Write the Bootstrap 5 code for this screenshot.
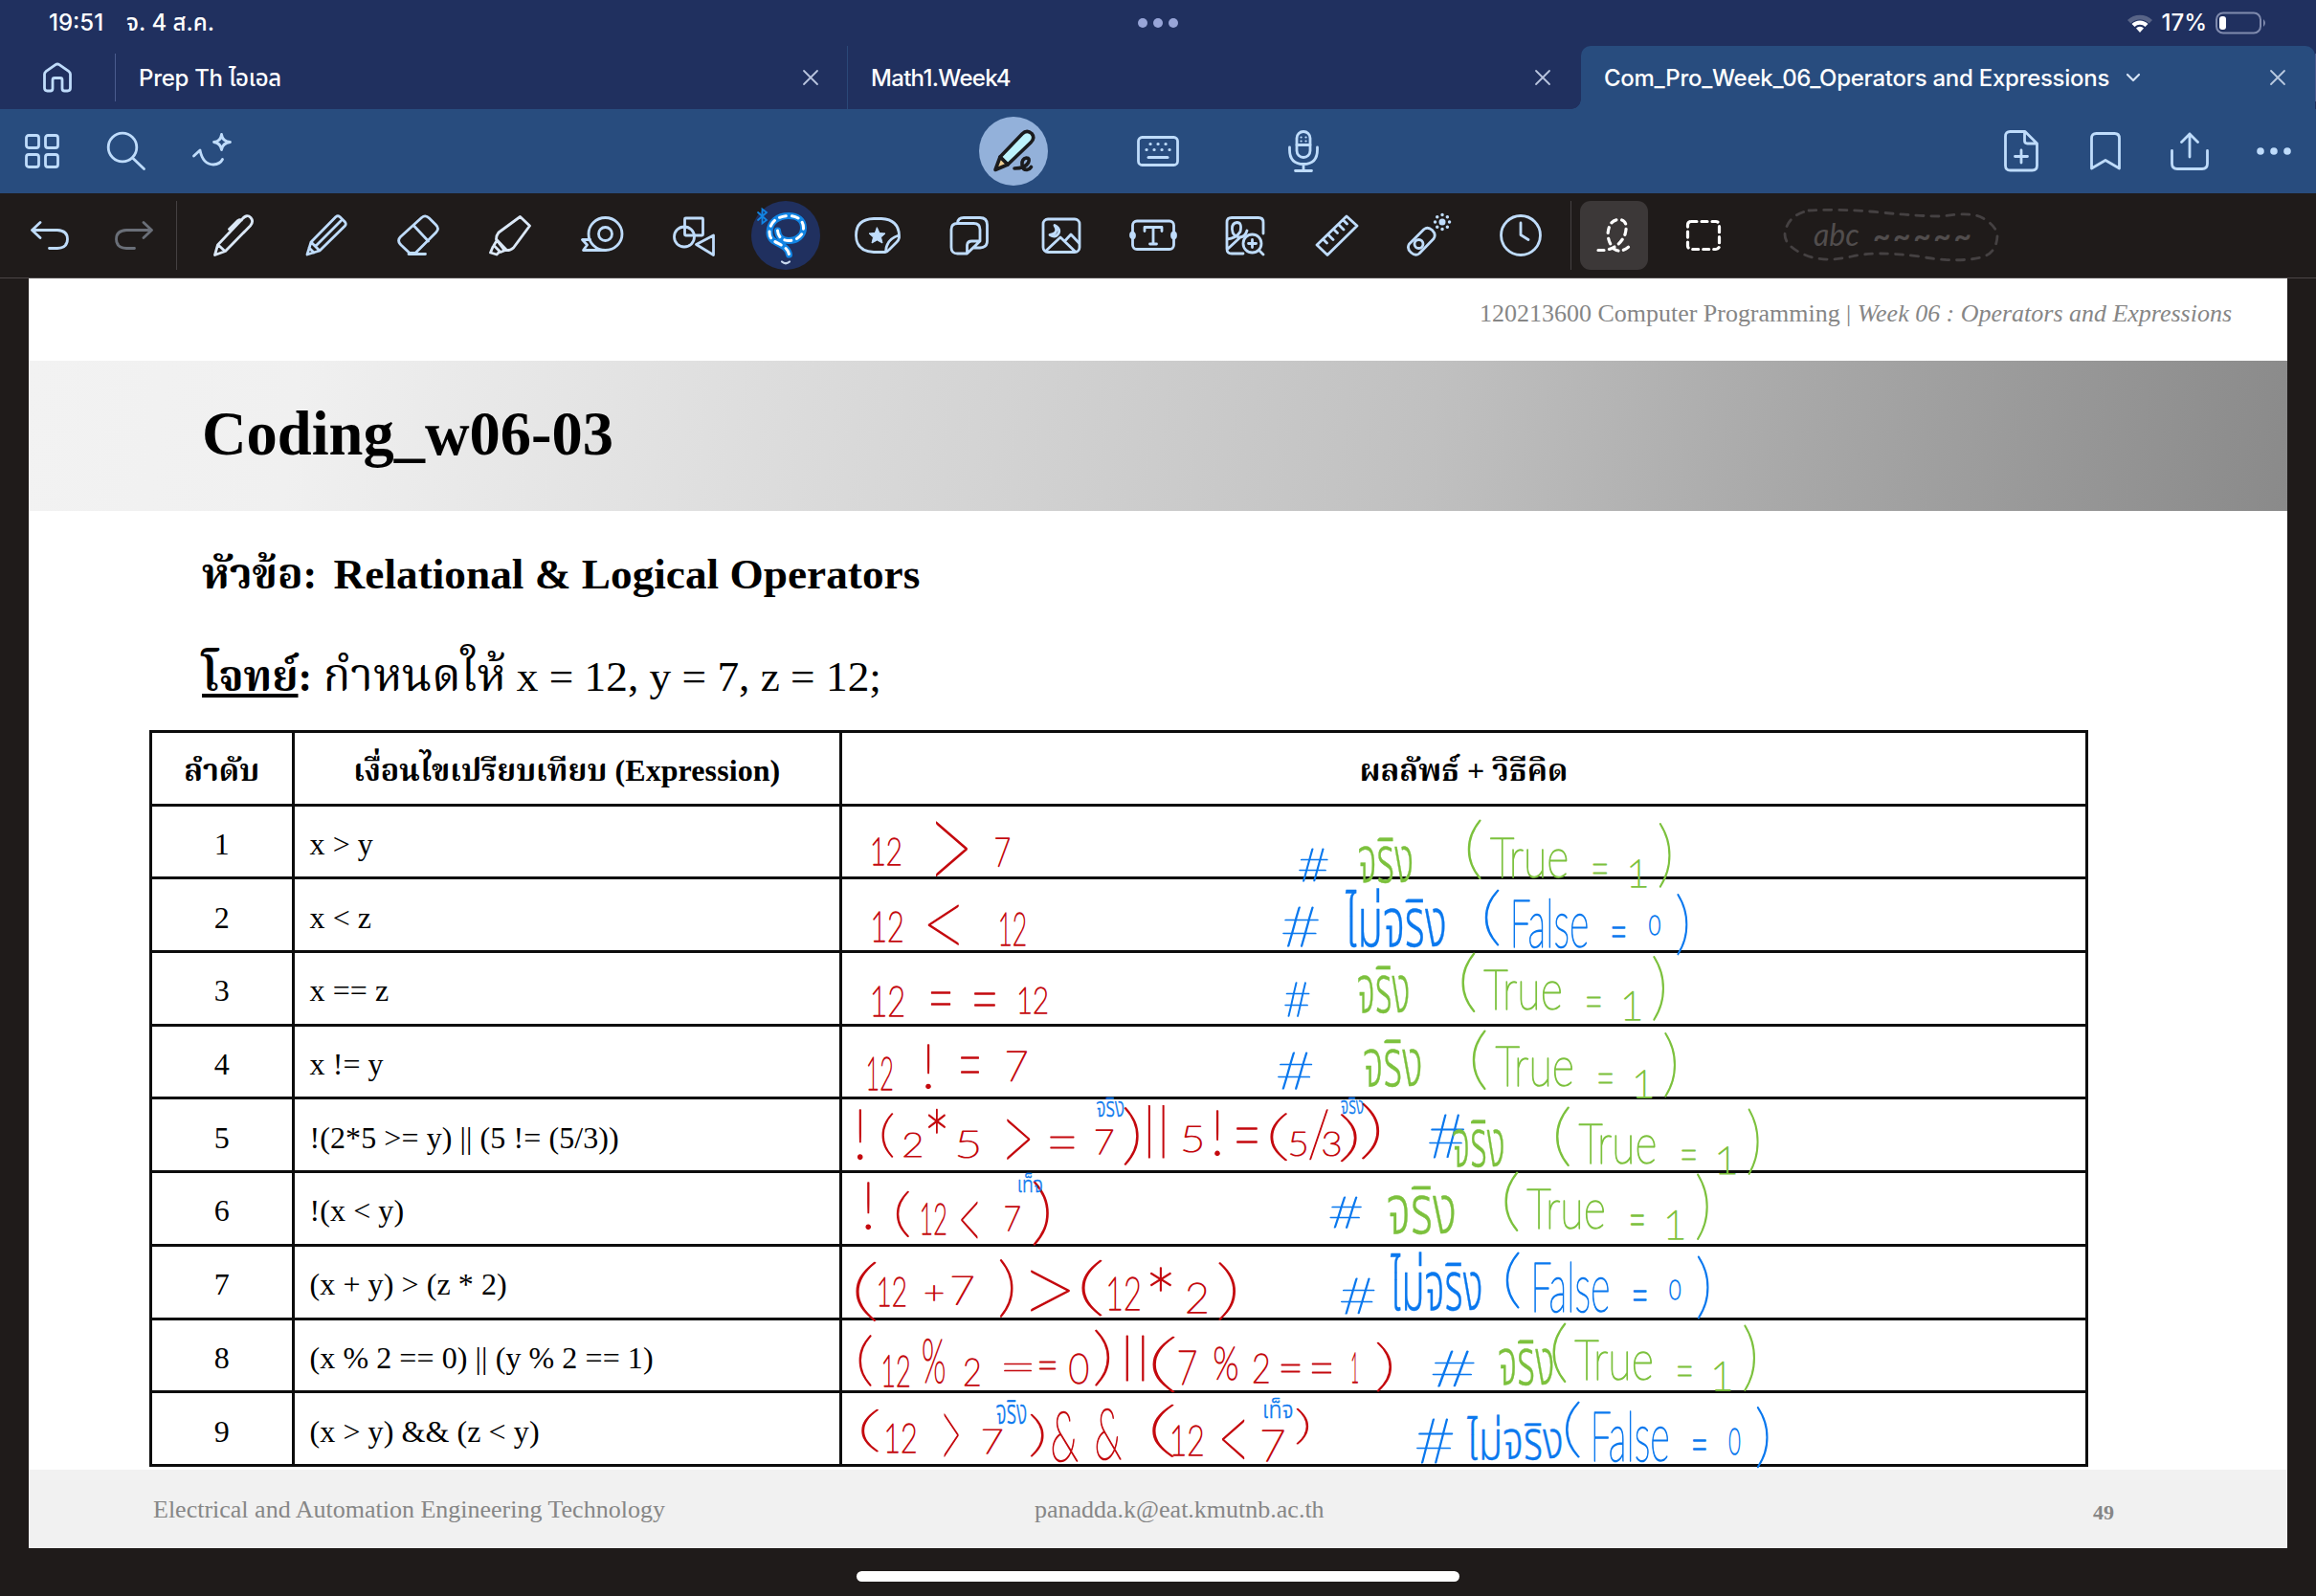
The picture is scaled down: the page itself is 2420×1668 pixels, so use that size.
<!DOCTYPE html>
<html lang="th">
<head>
<meta charset="utf-8">
<title>Com_Pro_Week_06_Operators and Expressions</title>
<link href="https://cdn.jsdelivr.net/npm/bootstrap@5.3.0/dist/css/bootstrap.min.css" rel="stylesheet">
<script src="https://cdn.jsdelivr.net/npm/bootstrap@5.3.0/dist/js/bootstrap.bundle.min.js"></script>
<style>
  :root{--navy:#20305f;--blue:#284c7e;--ink:#1f1b1a;--ice:#bfdcfb}
  html,body{width:2420px;height:1668px;overflow:hidden}
  body{background:var(--ink);color:#fff;font-family:Inter,"Noto Sans","Noto Sans Thai",sans-serif;font-size:24px}
  svg{display:block;overflow:visible;flex:none}
  .ln{fill:none;stroke:var(--ice);stroke-width:2.8;stroke-linecap:round;stroke-linejoin:round}
  .statusbar{height:48px;background:var(--navy);padding:0 51px;line-height:48px;font-weight:500}
  .statusbar .side{width:400px}
  .tabstrip{height:66px;background:var(--navy);line-height:66px;font-weight:500;font-size:24px}
  .homecell{width:120px;height:66px}
  .vr-short{width:1px;height:50px;background:#4a5b8e}
  .doc{height:66px;border-right:1px solid #2b4878;padding:0 28px 0 24px;letter-spacing:-.27px}
  .doc span{padding-top:2px}
  .doc.on{background:var(--blue);border:0;border-radius:10px 10px 0 0;position:relative}
  .doc.on::before{content:"";position:absolute;left:-10px;bottom:0;width:10px;height:10px;background:radial-gradient(circle at 0 0,var(--navy) 9.5px,var(--blue) 10px)}
  .navrow{height:88px;background:var(--blue)}
  .cell88{width:88px}.cell96{width:96px}.cellmode{width:151.5px}
  .toolrow{height:89px;border-bottom:1px solid #4b4647;padding-left:8px;padding-bottom:1px}
  .vr-tool{width:1px;height:72px;background:#454142}
  .optbox{width:71px;height:72px;border-radius:11px;background:#3c3838}
  .sheet{width:2360px;height:1327px;margin-left:30px;background:#fff;color:#000;font-family:"Liberation Serif","Noto Serif Thai",serif;position:relative}
  .runhead{height:86px;padding:19px 58px 0 0;font-size:25.98px;line-height:36px;color:#868686;text-align:right}
  .band{height:157px;padding-left:181px;background:linear-gradient(98deg,#f2f2f2 0%,#f0f0f0 12%,#e2e2e2 27%,#d4d4d4 42%,#c0c0c0 62%,#a8a8a8 78%,#979797 90%,#8a8a8a 100%)}
  .band h1{font-size:64.5px;font-weight:700;margin:0;line-height:154px}
  .topic{height:229px;padding-left:181px}
  .topic p{margin:0;white-space:nowrap;font-size:45.3px;line-height:60px;height:60px;box-sizing:content-box}
  .topic .th{font-size:44px}
  .topic .thl{font-size:47.6px;line-height:50px}
  .topic p:first-child{padding-top:36px;font-weight:700}
  .topic p:first-child .th{margin-right:6px}
  .topic p:last-child{padding-top:47px}
  .quiz{width:2026px;margin-left:126px;table-layout:fixed;border-collapse:collapse;font-size:32px;line-height:40px;color:#000}
  .quiz th,.quiz td{border:3px solid #0c0c0c;height:76.7px;padding:5px 0 0 16px;vertical-align:middle;letter-spacing:.08px}
  .quiz th,.quiz td:first-child{text-align:center;padding-left:0}
  .pagefoot{position:absolute;left:0;right:0;bottom:0;height:82px;background:#f1f1f1;color:#868686;font-size:26px;line-height:82px;padding:1px 181px 0 130px}
  .footleft{width:921px}
  .pageno{font-size:22px;font-weight:700;padding-top:3px}
  .inkpad{position:absolute;left:-30px;top:-291px;width:2420px;height:1668px;pointer-events:none}
  .inkpad text{font-family:Lato,"Noto Sans Thai",sans-serif;white-space:pre;stroke-width:1.3px;stroke-linejoin:round;stroke-linecap:round;vector-effect:non-scaling-stroke}
  .inkpad text.thai{stroke-width:.4px}
  .homepill{width:630px;height:11px;border-radius:6px;background:#fff;margin:24px auto 0}
  .abc{font-style:italic;font-size:32px;fill:#514d4d}
</style>
</head>
<body>
<header>
  <div class="statusbar d-flex justify-content-between align-items-center">
    <div class="side d-flex"><span style="width:81px">19:51</span><span>จ. 4 ส.ค.</span></div>
    <svg width="42" height="10"><g fill="#98a5d8"><circle cx="5" cy="5" r="5"/><circle cx="21" cy="5" r="5"/><circle cx="37" cy="5" r="5"/></g></svg>
    <div class="side d-flex justify-content-end align-items-center">
      <svg width="28" height="22" viewBox="0 0 28 22" class="me-2"><path d="M1 8A18.500 18.500 0 0 1 27 8L23.500 11.500A13.500 13.500 0 0 0 4.500 11.500Z" fill="#fff" opacity=".25"/><path d="M5.500 12A12 12 0 0 1 22.500 12L19.500 15A8 8 0 0 0 8.500 15Z" fill="#fff"/><path d="M10 16.500A5.500 5.500 0 0 1 18 16.500L14 21Z" fill="#fff"/></svg>
      <span style="margin-right:9px">17%</span>
      <svg width="54" height="24" viewBox="0 0 54 24"><rect x="1" y="1.500" width="46" height="21" rx="7" fill="none" stroke="#808bae" stroke-width="2"/><rect x="4" y="5" width="7" height="14" rx="3" fill="#fff"/><path d="M50 8q4 4 0 8z" fill="#808bae"/></svg>
    </div>
  </div>
  <div class="tabstrip d-flex align-items-center">
    <div class="homecell d-flex align-items-center justify-content-center"><svg width="30" height="30" viewBox="0 0 30 30" class="ln"><path d="M1.500 11.500Q1.500 10 3 8.700L13 1.700Q15 .3 17 1.700L27 8.700Q28.500 10 28.500 11.500V26Q28.500 29 25.500 29H22.500Q20 29 20 26.500V17.500Q20 15.500 18 15.500H12Q10 15.500 10 17.500V26.500Q10 29 7.500 29H4.500Q1.500 29 1.500 26Z"/></svg></div>
    <div class="vr-short"></div>
    <div class="doc d-flex align-items-center justify-content-between" style="width:765px"><span>Prep Th ไอเอล</span><svg width="16" height="16" class="ln" style="stroke:#b9c4de;stroke-width:1.8;margin-right:2px"><path d="M1 1 15 15M15 1 1 15"/></svg></div>
    <div class="doc d-flex align-items-center justify-content-between" style="width:766px;border:0"><span style="letter-spacing:-.7px">Math1.Week4</span><svg width="16" height="16" class="ln" style="stroke:#b9c4de;stroke-width:1.8;margin-right:4px"><path d="M1 1 15 15M15 1 1 15"/></svg></div>
    <div class="doc on d-flex align-items-center" style="width:767px"><span>Com_Pro_Week_06_Operators and Expressions</span><svg width="14" height="8" class="ln" style="stroke:#d5e3f5;stroke-width:2.2;margin-left:18px"><path d="M1 1 7 7 13 1"/></svg><svg width="16" height="16" class="ln ms-auto" style="stroke:#b9c9e0;stroke-width:1.8;margin-right:3px"><path d="M1 1 15 15M15 1 1 15"/></svg></div>
    <div class="vr-short"></div>
  </div>
  <nav class="navrow d-flex align-items-center justify-content-between">
    <div class="d-flex" style="width:352px">
      <div class="cell88 d-flex justify-content-center align-items-center"><svg width="36" height="36" class="ln"><rect x="1.500" y="1.500" width="13" height="13" rx="2.500"/><rect x="21.500" y="1.500" width="13" height="13" rx="2.500"/><rect x="1.500" y="21.500" width="13" height="13" rx="2.500"/><rect x="21.500" y="21.500" width="13" height="13" rx="2.500"/></svg></div>
      <div class="cell88 d-flex justify-content-center"><svg width="40" height="40" class="ln"><circle cx="16" cy="16" r="14.800"/><path d="M26.500 27 38.500 38.500"/></svg></div>
      <div class="cell88 d-flex justify-content-center"><svg width="40" height="40" class="ln"><path d="M2.500 25 9 19C11 29 16 34 23 34Q30 33.500 32.500 28.500M31.500 2.500Q32.500 10 40.500 10.500Q32.500 11.500 31.500 18.500Q30.500 11.500 23.500 10.500Q30.500 10 31.500 2.500Z"/></svg></div>
    </div>
    <div class="d-flex align-items-center">
      <div class="cellmode d-flex justify-content-center"><svg width="72" height="72"><circle cx="36" cy="36" r="36" fill="#93b1da"/><g stroke="#1b1b1d" stroke-width="3.600" stroke-linejoin="round" stroke-linecap="round" fill="none"><path d="M22 42 45 18Q50 13 55 17.500Q59 22 54 27L30 50Z" fill="#bdf3fc"/><path d="M22 42 17 55.500 30 50Z" fill="#efcf93"/><path d="M37 54Q48 54 51.500 48Q53.500 43 49.500 43Q44.500 44 45 50Q45.500 55.500 50 55.500Q53 55 54.500 52.500"/></g></svg></div>
      <div class="cellmode d-flex justify-content-center align-items-center"><svg width="44" height="32" class="ln"><rect x="1.500" y="1.500" width="41" height="29" rx="4"/><path d="M12 22.500H32" stroke-width="3"/><g stroke-width="3.200"><path d="M14 8.500h.1M22 8.500h.1M30 8.500h.1M10 14.500h.1M18 14.500h.1M26 14.500h.1M34 14.500h.1"/></g></svg></div>
      <div class="cellmode d-flex justify-content-center"><svg width="32" height="44" class="ln"><rect x="9" y="1.500" width="14" height="27" rx="7"/><path d="M1.500 18V20.500Q1.500 35.500 16 35.500Q30.500 35.500 30.500 20.500V18M16 35.500V42M7.500 42.500H24.500M9 15.500H23"/><path stroke-width="2.200" d="M13.500 7.500h.1M18.500 7.500h.1M13.500 11.500h.1M18.500 11.500h.1"/></svg></div>
    </div>
    <div class="d-flex align-items-center">
      <div class="cell88 d-flex justify-content-center"><svg width="36" height="44" class="ln"><path d="M6.500 1.500H22L34.500 14V37Q34.500 42 29.500 42H6.500Q1.500 42 1.500 37V6.500Q1.500 1.500 6.500 1.500ZM21.500 2V11Q21.500 14 24.500 14H34M18 21V34M11.500 27.500H24.500"/></svg></div>
      <div class="cell88 d-flex justify-content-center"><svg width="32" height="40" class="ln"><path d="M1.500 38V6.500Q1.500 1.500 6.500 1.500H25.500Q30.500 1.500 30.500 6.500V38L16 29.500Z"/></svg></div>
      <div class="cell88 d-flex justify-content-center"><svg width="40" height="40" class="ln"><path d="M1.500 19.500V33Q1.500 38.500 7 38.500H33Q38.500 38.500 38.500 33V19.500M20 26V2M11.500 10.500 20 2 28.500 10.500"/></svg></div>
      <div class="cell88 d-flex justify-content-center"><svg width="38" height="10"><g fill="#bfdcfb"><circle cx="5" cy="5" r="3.800"/><circle cx="19" cy="5" r="3.800"/><circle cx="33" cy="5" r="3.800"/></g></svg></div>
    </div>
  </nav>
  <div class="toolrow d-flex align-items-center">
    <div class="cell88 d-flex justify-content-center"><svg width="40" height="30" class="ln"><path d="M10 1.500 1.500 9.500 10 17.500M2 9.500H28Q38.500 10 38.500 19Q38.500 28 28 28.500H19.500"/></svg></div>
    <div class="cell88 d-flex justify-content-center"><svg width="40" height="30" class="ln" style="stroke:#6a6f78"><path d="M30 1.500 38.500 9.500 30 17.500M38 9.500H12Q1.500 10 1.500 19Q1.500 28 12 28.500H20.500"/></svg></div>
    <div class="vr-tool" style="margin:0 12px 0 0"></div>
    <div class="cell96 d-flex justify-content-center"><svg width="48" height="48" class="ln" style="stroke:#dbe8f7"><path d="M3.500 44.500 6.500 34 32.500 6.500Q37 1.500 41 5.500Q44.500 9.500 40.500 14L14.500 40.500ZM7 34 14 40.500M18.500 17.500 27.500 8.500Q29.500 7 31.500 8"/></svg></div>
    <div class="cell96 d-flex justify-content-center"><svg width="48" height="48" class="ln"><path d="M4 44 8 31 34 4.500Q36 3 38 4.500L43.500 10Q45 12 43.500 14L17 40ZM8 31 17 40M12.500 35.500 39 9M6 37 11 42"/></svg></div>
    <div class="cell96 d-flex justify-content-center"><svg width="48" height="48" class="ln"><path d="M27.500 5.500Q31.500 2 35.500 6L42.500 13Q46.500 17 42.500 21L21 42.500H15L6 34Q1.500 29.500 5.500 25.500ZM20 14.500 34.500 30M14 43.500H31.500"/></svg></div>
    <div class="cell96 d-flex justify-content-center"><svg width="48" height="48" class="ln" style="stroke:#dbe8f7"><path d="M9.500 28Q9.500 24 12 21L34.500 4.500L44.500 14L27.500 37Q24 40.500 18 39.500ZM9.500 28 20.500 39.500M10 29.500 7 34.500 14 41.500 19 39.500M6 36 3.500 42 10 44 13 41"/></svg></div>
    <div class="cell96 d-flex justify-content-center"><svg width="48" height="48" class="ln"><ellipse cx="27.500" cy="22.500" rx="17.500" ry="17"/><circle cx="27.500" cy="22.500" r="7"/><path d="M27.500 39.500H4.500L8.500 34 3.500 28.500H11.500"/></svg></div>
    <div class="cell96 d-flex justify-content-center"><svg width="48" height="48" class="ln"><rect x="14.500" y="6" width="19" height="18" rx="1"/><circle cx="14" cy="25.500" r="10.500"/><path d="M26.500 33.500 44.500 24V44.500Z"/></svg></div>
    <div class="cell96 d-flex justify-content-center"><svg width="72" height="72"><circle cx="36" cy="36" r="36" fill="#20305f"/><g fill="none" stroke-linecap="round"><path d="M27.500 31C28 38 33 41.500 39 41.500C48 41.500 54.500 36 54.500 28C54.500 20 48 15.500 39 15.500C28 15.500 19 22 19 33C19 46 37 43 39.500 56" stroke="#1285e4" stroke-width="7"/><path d="M27.500 31C28 38 33 41.500 39 41.500C48 41.500 54.500 36 54.500 28C54.500 20 48 15.500 39 15.500C28 15.500 19 22 19 33C19 46 37 43 39.500 56" stroke="#fff" stroke-width="3" stroke-dasharray="7 6"/><path d="M32 63.500Q36 67 40 63.500" stroke="#c9d9ee" stroke-width="2.200"/><path d="M7 12 16 20 11.500 23.500V8.500L16 12 7 20" stroke="#1285e4" stroke-width="1.800"/></g></svg></div>
    <div class="cell96 d-flex justify-content-center"><svg width="48" height="48" class="ln"><path d="M32 41.500H20Q1.500 40.500 1.500 24Q1.500 7 20 6.500H28Q46 7.500 46.500 24V26.500Q46 29 44 31L36 39Q34 41.500 32 41.500ZM32.500 41Q33 28 46 24"/><path d="M23.500 16 26 21.500 32 22 27.500 26 29 32 23.500 29 18 32 19.500 26 15 22 21 21.500Z" fill="#bfdcfb" stroke-width="1"/></svg></div>
    <div class="cell96 d-flex justify-content-center"><svg width="48" height="48" class="ln"><path d="M5 18Q5 11.500 11.500 11.500H28.500Q35 11.500 35 18V30L21.500 43H11.500Q5 43 5 36.500ZM21.500 42.500V35Q21.500 30 26.500 30H35M11.500 11Q12 5.500 18 5.500H35Q42.500 5.500 42.500 13V30Q42.500 36.500 35 37H29"/></svg></div>
    <div class="cell96 d-flex justify-content-center"><svg width="48" height="48" class="ln"><rect x="5" y="7" width="38" height="34.500" rx="5"/><path d="M8 40 23 26 38 40.500M28 29.500 34 23 42.500 32M17 13.500Q22 22 12 23.500Q18 27 21 22Q23.500 17 17 13.500Z"/></svg></div>
    <div class="cell96 d-flex justify-content-center"><svg width="48" height="48" class="ln"><rect x="2.500" y="9" width="43" height="29.500" rx="4.500"/><path d="M15 19.500V15.500H33V19.500M24 15.500V33M20.500 33H27.500"/><ellipse cx="2.500" cy="24" rx="2" ry="2.800" fill="#bfdcfb"/><ellipse cx="45.500" cy="24" rx="2" ry="2.800" fill="#bfdcfb"/></svg></div>
    <div class="cell96 d-flex justify-content-center"><svg width="48" height="48" class="ln"><path d="M22 43H10Q5 43 5 38V10.500Q5 5.500 10 5.500H38Q43 5.500 43 10.500V22M5 28Q15 27 19 20Q21 10.500 15.500 10.500Q10 11 10.500 18Q11 25 18 26Q24 26 26 19M6 38 19 26"/><circle cx="31.500" cy="32.500" r="9.500"/><path d="M38.500 39.500 43 44M31.500 28.500V36.500M27.500 32.500H35.500"/></svg></div>
    <div class="cell96 d-flex justify-content-center"><svg width="48" height="48" class="ln"><path d="M3 34 34 4 45 14 14 44.500ZM9.500 28 13.500 32M14.500 23 20 28.500M20.500 17.500 24.500 21.500M25.500 12.500 31 18M30.500 8 34.500 12"/></svg></div>
    <div class="cell96 d-flex justify-content-center"><svg width="48" height="48" class="ln"><path d="M3.500 33 19 17.500Q23 14.500 27.500 18.500Q32 23 29 27.500L14 43Q10 46 5.500 42Q.5 37.500 3.500 33Z"/><circle cx="13.500" cy="33" r="4.500"/><circle cx="38" cy="10" r="3.500" fill="#bfdcfb" stroke="none"/><path d="M38 2.500h.1M38 17.500h.1M30.500 10h.1M45.500 10h.1M32.700 4.700h.1M43.300 4.700h.1M32.700 15.300h.1M43.300 15.300h.1" stroke-width="3.400"/></svg></div>
    <div class="cell96 d-flex justify-content-center"><svg width="48" height="48" class="ln"><circle cx="24" cy="24" r="20.500"/><path d="M24 11V23.500L32 28.500"/></svg></div>
    <div class="vr-tool" style="margin:0 9px 0 4px"></div>
    <div class="optbox d-flex align-items-center justify-content-center"><svg width="38" height="38" class="ln" style="stroke:#fff;stroke-width:3.200;stroke-dasharray:6 5.500"><path d="M2 34.500H9Q24 32 30 18Q34 3 24 2.500Q13 2.500 12 18Q13 28 19 33.500Q26 38 35 30"/></svg></div>
    <div class="cell96 d-flex justify-content-center" style="margin-left:10px"><svg width="36" height="32" class="ln" style="stroke:#fff;stroke-width:3.200;stroke-dasharray:6 5"><rect x="1.500" y="1.500" width="33" height="29" rx="3.500"/></svg></div>
    <svg width="222" height="54" style="margin-left:37px"><path d="M25 1Q60-1 100 3T165 7Q195 2 207 9Q222 18 222 28Q221 46 205 50Q180 56 140 49Q95 43 70 49Q40 56 20 47Q0 38 0 26Q2 6 25 1Z" fill="none" stroke="#454142" stroke-width="2.800" stroke-dasharray="8 8" stroke-linecap="round"/><text x="30" y="38" class="abc" font-family="Lato">abc</text><text x="92" y="39" class="abc" font-family="Lato" font-weight="700" textLength="103" lengthAdjust="spacing">~~~~~</text></svg>
  </div>
</header>
<main class="sheet">
  <div class="runhead">120213600 Computer Programming | <em>Week 06 : Operators and Expressions</em></div>
  <div class="band"><h1>Coding_w06-03</h1></div>
  <div class="topic">
    <p><span class="th">หัวข้อ:</span> Relational &amp; Logical Operators</p>
    <p><b class="th"><u>โจทย์</u>:</b> <span class="thl">กำหนดให้</span> x = 12, y = 7, z = 12;</p>
  </div>
  <table class="quiz">
    <colgroup><col style="width:148.5px"><col style="width:572.5px"><col></colgroup>
    <tr><th>ลำดับ</th><th>เงื่อนไขเปรียบเทียบ (Expression)</th><th>ผลลัพธ์ + วิธีคิด</th></tr>
    <tr><td>1</td><td>x &gt; y</td><td></td></tr>
    <tr><td>2</td><td>x &lt; z</td><td></td></tr>
    <tr><td>3</td><td>x == z</td><td></td></tr>
    <tr><td>4</td><td>x != y</td><td></td></tr>
    <tr><td>5</td><td>!(2*5 &gt;= y) || (5 != (5/3))</td><td></td></tr>
    <tr><td>6</td><td>!(x &lt; y)</td><td></td></tr>
    <tr><td>7</td><td>(x + y) &gt; (z * 2)</td><td></td></tr>
    <tr><td>8</td><td>(x % 2 == 0) || (y % 2 == 1)</td><td></td></tr>
    <tr><td>9</td><td>(x &gt; y) &amp;&amp; (z &lt; y)</td><td></td></tr>
  </table>
  <div class="pagefoot d-flex"><span class="footleft">Electrical and Automation Engineering Technology</span><span>panadda.k@eat.kmutnb.ac.th</span><span class="pageno ms-auto">49</span></div>
  <svg class="inkpad" id="inkpad"></svg>
</main>
<div class="homepill"></div>
<script>
// Handwritten notes: each entry is text, left, top, right, bottom in its panel's own units.
const RED='#c4090e', BLUE='#0a78ee', GREEN='#7cc13d';
const panels=[
 {ox:870,oy:750,sx:3,sy:3,ink:[
  [RED,['12',126,378,213,462],['>',325,327,422,500],['7',512,382,554,470],
       ['12',128,610,218,702],['<',300,587,394,714],['12',526,612,604,714],
       ['12',126,840,222,935],['=',310,862,368,900],['=',446,865,508,902],['12',586,848,672,928],
       ['12',112,1065,186,1166],['!',292,1026,308,1164],['=',404,1064,458,1112],['7',548,1046,608,1140]]]},
 {ox:1320,oy:750,sx:2.8,sy:3,ink:[
  [BLUE,['#',106,410,188,514],['#',58,592,160,716],['#',64,830,134,936],['#',44,1048,142,1164],
        ['ไม่จริง',240,532,530,718],['(',650,540,688,714],['False',733,565,948,722],['=',1022,656,1058,686],['0',1130,622,1160,682],[')',1212,550,1240,744]],
  [GREEN,['จริง',280,376,434,518],['(',600,320,636,508],['True',665,378,888,502],['=',966,458,1004,488],['1',1074,446,1120,532],[')',1160,330,1190,534],
         ['จริง',278,780,424,926],['(',582,738,618,924],['True',646,794,870,916],['=',948,874,986,904],['1',1056,860,1102,948],[')',1142,746,1172,950],
         ['จริง',296,1012,460,1158],['(',614,978,650,1166],['True',680,1036,904,1158],['=',982,1116,1020,1146],['1',1090,1104,1136,1190],[')',1176,988,1206,1192]]]},
 {ox:870,oy:1130,sx:3,sy:3,ink:[
  [RED,['!',78,92,94,246],['(',156,100,188,240],['2',224,160,278,238],['*',300,88,352,162],['5',394,152,456,240],['>',548,120,618,246],['=',684,172,756,208],['7',826,152,878,230],[')',916,80,958,262],['||',990,76,1038,242],['5',1100,140,1156,224],['!',1198,92,1214,234],['=',1268,146,1330,192],
       ['!',104,318,120,464],['(',202,346,238,490],['12',280,382,354,480],['<',404,376,454,492],['7',542,394,586,470],[')',630,312,676,516],
       ['(',74,566,134,752],['12',146,614,228,704],['+',292,640,346,686],['7',376,612,440,702],[')',526,560,564,740],['>',622,594,742,722],['(',782,558,842,736],['12',866,612,962,716],['*',996,586,1060,658],['2',1112,634,1172,726],[')',1212,568,1262,748],
       ['(',84,796,120,956],['12',160,856,240,956],['%',284,808,350,948],['2',414,868,460,954],['=',540,888,622,910],['=',650,882,698,904],['0',744,852,800,948],[')',824,782,866,956],['||',920,798,974,940],['(',1004,802,1070,976],['7',1086,844,1138,952],['%',1198,834,1268,938],['2',1320,856,1366,946],['=',1408,888,1464,912],
       ['(',92,1026,142,1162],['12',170,1076,260,1164],['>',350,1042,394,1178],['7',472,1092,530,1168],[')',622,1044,660,1176],['&',690,1038,768,1192],['&',828,1030,904,1188],['(',1004,1012,1068,1180],['12',1066,1078,1160,1172],['<',1222,1060,1290,1184],['7',1348,1094,1414,1192],[')',1456,1026,1490,1138]],
  [BLUE,['จริง',828,52,912,112],['เท็จ',584,290,656,350],['จริง',514,1002,606,1076],['เท็จ',1354,990,1440,1056]]]},
 {ox:1320,oy:1130,sx:2.8,sy:3,ink:[
  [RED,['(',22,100,68,250],['5',80,160,124,236],['/',136,86,188,244],['3',176,160,224,236],[')',228,104,272,254],[')',290,70,338,244],
       ['=',144,884,198,914],['1',260,852,276,944],[')',334,820,374,974]],
  [BLUE,['จริง',228,50,292,104],['#',486,102,586,240],['#',196,362,286,458],['#',228,618,324,730],['#',496,846,616,958],['#',450,1056,554,1196],
        ['ไม่จริง',372,534,636,718],['(',712,538,748,714],['False',794,564,1010,724],['=',1084,656,1120,686],['0',1190,624,1220,684],[')',1272,550,1302,746],
        ['ไม่จริง',596,1044,872,1186],['(',886,1006,924,1182],['False',968,1030,1184,1192],['=',1258,1124,1294,1154],['0',1364,1090,1394,1170],[')',1446,1018,1476,1212]],
  [GREEN,['จริง',556,122,702,268],['(',858,78,894,266],['True',924,136,1146,260],['=',1226,216,1264,246],['1',1332,204,1380,290],[')',1420,88,1448,294],
         ['จริง',366,328,558,480],['(',708,282,744,470],['True',772,340,996,464],['=',1076,420,1112,450],['1',1182,406,1228,494],[')',1270,292,1300,498],
         ['จริง',690,812,846,954],['(',848,758,884,944],['True',912,814,1136,938],['=',1214,894,1252,924],['1',1320,880,1366,968],[')',1408,766,1438,972]]]}
];
const pad=document.getElementById('inkpad');
const pen=document.createElement('canvas').getContext('2d');
for(const p of panels) for(const [color,...words] of p.ink) for(const [t,l,tp,r,b] of words){
  const thai=/[\u0e00-\u0e7f]/.test(t);
  const weight=thai?300:100;
  pen.font=weight+' 100px Lato,"Noto Sans Thai",sans-serif';
  const m=pen.measureText(t);
  const mw=m.actualBoundingBoxLeft+m.actualBoundingBoxRight, mh=m.actualBoundingBoxAscent+m.actualBoundingBoxDescent;
  const ky=(b-tp)/p.sy/mh, kx=(r-l)/p.sx/mw;
  const e=document.createElementNS('http://www.w3.org/2000/svg','text');
  const x=p.ox+l/p.sx+m.actualBoundingBoxLeft*kx, y=p.oy+tp/p.sy+m.actualBoundingBoxAscent*ky;
  e.setAttribute('transform','translate('+x.toFixed(1)+' '+y.toFixed(1)+') scale('+(kx/ky).toFixed(3)+' 1)');
  e.setAttribute('font-size',(100*ky).toFixed(1));
  e.setAttribute('font-weight',weight);
  e.setAttribute('fill',color);
  e.setAttribute('stroke',color);
  if(thai) e.setAttribute('class','thai');
  e.textContent=t;
  pad.appendChild(e);
}
</script>
</body>
</html>
